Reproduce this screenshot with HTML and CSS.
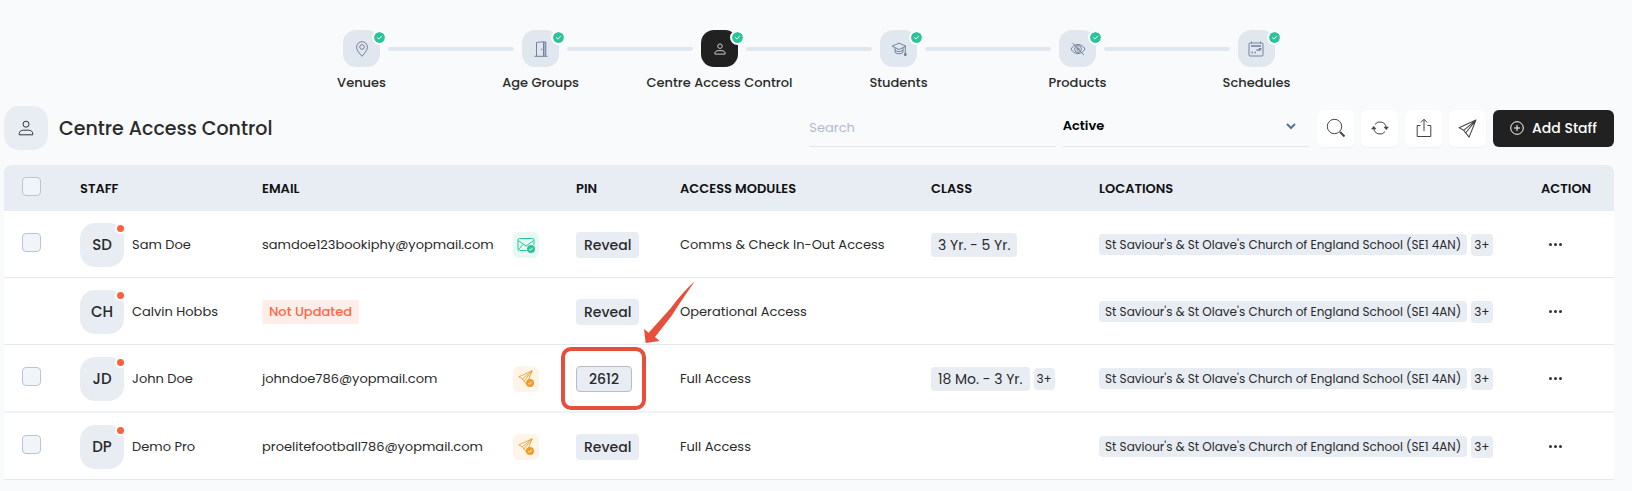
FILE: index.html
```html
<!DOCTYPE html>
<html lang="en">
<head>
<meta charset="utf-8">
<meta name="viewport" content="width=device-width, initial-scale=1">
<title>Centre Access Control</title>
<link rel="stylesheet" href="styles.css">
</head>
<body>
<svg class="sprite" aria-hidden="true">
  <symbol id="tick" viewBox="0 0 12 12"><circle cx="6" cy="6" r="6" fill="#2bc39b"/><path d="M3.8 6.2l1.6 1.5 2.9-3.1" fill="none" stroke="#fff" stroke-linecap="round" stroke-linejoin="round"/></symbol>
  <symbol id="person" viewBox="0 0 16 16"><circle cx="8" cy="4.2" r="3"/><path d="M1.2 14.8v-.9c0-2.500 2-3.700 4.200-3.700h5.200c2.200 0 4.200 1.200 4.200 3.700v.9z"/></symbol>
  <symbol id="plane" viewBox="0 0 18 18"><path d="M17 1L1 8.200l4.300 2.500L10.500 17.200z M17 1L5.300 10.700 M17 1L7.400 13"/></symbol>
  <symbol id="badge" viewBox="0 0 8 8"><circle cx="4" cy="4" r="4" fill="currentColor" stroke="none"/><path d="M2.300 4.200l1.200 1.100 2.200-2.500" fill="none" stroke="#fff"/></symbol>
</svg>
<main class="page">
  <nav aria-label="Setup steps">
    <ol class="steps">
      <li class="step">
        <div class="step-track"><span class="step-icon"><svg class="icon" width="16" height="16" viewBox="0 0 16 16"><path d="M8 15.300C5 12 2.600 9 2.600 6.100a5.400 5.400 0 0 1 10.800 0C13.400 9 11 12 8 15.300z"/><circle cx="8" cy="6" r="2.300"/></svg><svg class="step-tick"><use href="#tick"/></svg></span></div>
        <span class="step-label">Venues</span>
      </li>
      <li class="step">
        <div class="step-track"><span class="step-icon"><svg class="icon" width="16" height="16" viewBox="0 0 16 16"><path d="M1.500 15.300h13M3.500 15.300V1.500l7-.8v14.600M10.500 1h2.300v14.300M12 1v14"/><circle cx="8.500" cy="8.500" r=".4"/></svg><svg class="step-tick"><use href="#tick"/></svg></span></div>
        <span class="step-label">Age Groups</span>
      </li>
      <li class="step active">
        <div class="step-track"><span class="step-icon"><svg class="icon" width="12" height="12"><use href="#person"/></svg><svg class="step-tick"><use href="#tick"/></svg></span></div>
        <span class="step-label">Centre Access Control</span>
      </li>
      <li class="step">
        <div class="step-track"><span class="step-icon"><svg class="icon" width="16" height="16" viewBox="0 0 16 16"><path d="M8 2.200L15 5.200 8 8.500 1 5.200zM4 7v4.300c2 2 6.200 2 8 0V7M4 9.200c2 1.800 6.200 1.800 8 0M14.300 5.500v7"/><path d="M13.500 12.500h1.600v2h-1.600z" fill="currentColor"/></svg><svg class="step-tick"><use href="#tick"/></svg></span></div>
        <span class="step-label">Students</span>
      </li>
      <li class="step">
        <div class="step-track"><span class="step-icon"><svg class="icon" width="16" height="16" viewBox="0 0 16 16"><path d="M1 8c3.200-6 10.800-6 14 0-3.200 6-10.800 6-14 0zM2.500 2l11.500 12"/><circle cx="8" cy="8" r="3.400"/><circle cx="8" cy="8" r="1.200"/></svg><svg class="step-tick"><use href="#tick"/></svg></span></div>
        <span class="step-label">Products</span>
      </li>
      <li class="step">
        <div class="step-track"><span class="step-icon"><svg class="icon" width="16" height="16" viewBox="0 0 16 16"><rect x="1" y="2" width="14" height="13" rx="1"/><path d="M3.500.5v2M12.500.5v2"/><path d="M3 5h10M11 7.800h2.500M8.500 9h4M3.500 11.500h1.500M6.500 11.500h1.500" stroke-width="1.500"/></svg><svg class="step-tick"><use href="#tick"/></svg></span></div>
        <span class="step-label">Schedules</span>
      </li>
    </ol>
  </nav>

  <header class="toolbar">
    <span class="title-icon"><svg class="icon" width="16" height="16"><use href="#person"/></svg></span>
    <h1 class="title">Centre Access Control</h1>
    <input class="field search" type="search" placeholder="Search" aria-label="Search">
    <div class="select-wrap">
      <select class="field status" aria-label="Status"><option>Active</option><option>Inactive</option></select>
      <svg class="chevron" width="10" height="7" viewBox="0 0 10 7"><path d="M1 1l4 4 4-4"/></svg>
    </div>
    <button class="tool" type="button" aria-label="Search staff"><svg class="icon" width="20" height="20" viewBox="0 0 20 20"><circle cx="8.500" cy="8.500" r="7.200"/><path d="M14 14l4.500 4.500" stroke-width="2"/></svg></button>
    <button class="tool" type="button" aria-label="Refresh"><svg class="icon" width="18" height="18" viewBox="0 0 18 18"><path d="M3.800 5.500a6.300 6.300 0 0 1 11.400 3.500M14.200 12.500A6.300 6.300 0 0 1 2.800 9"/><path d="M13 8h4.400l-2.200 2.800zM.6 10H5L2.800 7.200z" fill="currentColor" stroke-width=".5"/></svg></button>
    <button class="tool" type="button" aria-label="Export"><svg class="icon" width="20" height="20" viewBox="0 0 20 20"><path d="M6.500 7.500H3.200v11h13.600v-11h-3.300M10 13V1.500M6.800 4.500L10 1.300l3.200 3.200"/></svg></button>
    <button class="tool" type="button" aria-label="Send"><svg class="icon" width="19" height="19"><use href="#plane"/></svg></button>
    <button class="add" type="button"><svg class="icon" width="14" height="14" viewBox="0 0 14 14"><circle cx="7" cy="7" r="6.300"/><path d="M7 4v6M4 7h6"/></svg>Add Staff</button>
  </header>

  <table class="staff">
    <colgroup><col class="c-check"><col class="c-staff"><col class="c-email"><col class="c-pin"><col class="c-access"><col class="c-class"><col class="c-loc"><col class="c-action"></colgroup>
    <thead>
      <tr><th class="check"><input type="checkbox" aria-label="Select all staff"></th><th>STAFF</th><th>EMAIL</th><th>PIN</th><th>ACCESS MODULES</th><th>CLASS</th><th>LOCATIONS</th><th>ACTION</th></tr>
    </thead>
    <tbody>
      <tr>
        <td class="check"><input type="checkbox" aria-label="Select Sam Doe"></td>
        <td><div class="person"><span class="avatar">SD</span>Sam Doe</div></td>
        <td><div class="email">samdoe123bookiphy@yopmail.com<span class="mail-state verified"><svg class="icon" width="18" height="18" viewBox="0 0 18 18"><path d="M9.500 14.500H2.500a1.500 1.500 0 0 1-1.500-1.500V4a1.500 1.500 0 0 1 1.500-1.500h13A1.500 1.500 0 0 1 17 4v5M1.300 4.500L9 10l7.700-5.500M1.500 13.500l4.500-5"/><use href="#badge" x="10" y="9" width="8" height="8"/></svg></span></div></td>
        <td><button class="pin" type="button">Reveal</button></td>
        <td>Comms &amp; Check In-Out Access</td>
        <td><div class="chips"><span class="chip">3 Yr. - 5 Yr.</span></div></td>
        <td><div class="chips"><span class="chip place">St Saviour's &amp; St Olave's Church of England School (SE1 4AN)</span><span class="chip more">3+</span></div></td>
        <td><button class="dots" type="button" aria-label="Actions for Sam Doe"><i></i><i></i><i></i></button></td>
      </tr>
      <tr>
        <td class="check"></td>
        <td><div class="person"><span class="avatar">CH</span>Calvin Hobbs</div></td>
        <td><span class="missing">Not Updated</span></td>
        <td><button class="pin" type="button">Reveal</button></td>
        <td>Operational Access</td>
        <td></td>
        <td><div class="chips"><span class="chip place">St Saviour's &amp; St Olave's Church of England School (SE1 4AN)</span><span class="chip more">3+</span></div></td>
        <td><button class="dots" type="button" aria-label="Actions for Calvin Hobbs"><i></i><i></i><i></i></button></td>
      </tr>
      <tr>
        <td class="check"><input type="checkbox" aria-label="Select John Doe"></td>
        <td><div class="person"><span class="avatar">JD</span>John Doe</div></td>
        <td><div class="email">johndoe786@yopmail.com<span class="mail-state sent"><svg class="icon" width="18" height="18" viewBox="0 0 18 18"><use href="#plane" width="17" height="15"/><use href="#badge" x="9" y="9" width="8" height="8"/></svg></span></div></td>
        <td><div class="callout"><button class="pin shown" type="button">2612</button><span class="callout-box"></span><svg class="callout-arrow" viewBox="489 240 159 192"><path d="M645 243Q604 280 572 325L506 398 492 387 497 429 539 423 525 411 575 347Q605 300 645 243z"/></svg></div></td>
        <td>Full Access</td>
        <td><div class="chips"><span class="chip">18 Mo. - 3 Yr.</span><span class="chip more">3+</span></div></td>
        <td><div class="chips"><span class="chip place">St Saviour's &amp; St Olave's Church of England School (SE1 4AN)</span><span class="chip more">3+</span></div></td>
        <td><button class="dots" type="button" aria-label="Actions for John Doe"><i></i><i></i><i></i></button></td>
      </tr>
      <tr>
        <td class="check"><input type="checkbox" aria-label="Select Demo Pro"></td>
        <td><div class="person"><span class="avatar">DP</span>Demo Pro</div></td>
        <td><div class="email">proelitefootball786@yopmail.com<span class="mail-state sent"><svg class="icon" width="18" height="18" viewBox="0 0 18 18"><use href="#plane" width="17" height="15"/><use href="#badge" x="9" y="9" width="8" height="8"/></svg></span></div></td>
        <td><button class="pin" type="button">Reveal</button></td>
        <td>Full Access</td>
        <td></td>
        <td><div class="chips"><span class="chip place">St Saviour's &amp; St Olave's Church of England School (SE1 4AN)</span><span class="chip more">3+</span></div></td>
        <td><button class="dots" type="button" aria-label="Actions for Demo Pro"><i></i><i></i><i></i></button></td>
      </tr>
    </tbody>
  </table>
</main>
</body>
</html>
```
FILE: styles.css
```css
*, *::before, *::after { box-sizing: border-box; }

body {
  margin: 0;
  background: #f9fafc;
  color: #2a2a2a;
  font: 13px/20px Poppins, Inter, sans-serif;
}

button, input, select { font: inherit; color: inherit; }
button { border: 0; cursor: pointer; }

.sprite { position: absolute; width: 0; height: 0; }
.icon { fill: none; stroke: currentColor; stroke-width: 1; stroke-linejoin: round; }

.page { padding: 30px 18px 0 4px; }

/* Stepper */
.steps { display: flex; width: 66.7%; margin: 0 auto; padding: 0; list-style: none; }
.step { flex: 1; text-align: center; }
.step-track { display: flex; align-items: center; gap: 8px; }
.step-track::before, .step-track::after { content: ""; flex: 1; height: 4px; background: #e1e7ef; }
.step-track::before { border-radius: 0 2px 2px 0; }
.step-track::after { border-radius: 2px 0 0 2px; }
.step:first-child .step-track::before, .step:last-child .step-track::after { background: none; }
.step-icon {
  position: relative;
  display: grid;
  place-items: center;
  width: 37px;
  height: 37px;
  border-radius: 13px;
  background: #e1e7ef;
  color: #73819d;
}
.active .step-icon { background: #212121; color: #fff; }
.step-tick {
  position: absolute;
  top: 0;
  right: -7px;
  width: 15px;
  height: 15px;
  border: 2px solid #f9fafc;
  border-radius: 50%;
  background: #f9fafc;
}
.step-label { display: block; margin-top: 6px; font-weight: 500; }

/* Toolbar */
.toolbar { display: flex; align-items: center; gap: 7px; margin-top: 13px; }
.title-icon {
  display: grid;
  place-items: center;
  width: 44px;
  height: 44px;
  border-radius: 15px;
  background: #e8edf4;
  color: #333;
}
.title { flex: 1; margin: 0 0 0 4px; padding-top: 1px; font-size: 19px; line-height: 28px; font-weight: 500; }
.field {
  width: 100%;
  height: 37px;
  padding: 0;
  border: 0;
  border-bottom: 1px solid #e4e7ea;
  border-radius: 0;
  background: none;
  appearance: none;
  outline: 0;
}
.search { width: 15.3%; }
.search::placeholder { color: #adbdcf; opacity: 1; }
.select-wrap { position: relative; width: 15.3%; }
.status { padding-bottom: 3px; color: #000; font-weight: 600; }
.chevron { position: absolute; top: 13px; right: 13px; fill: none; stroke: #5a7198; stroke-width: 2; pointer-events: none; }
.tool {
  display: grid;
  place-items: center;
  width: 37px;
  height: 37px;
  padding: 0;
  border-radius: 6px;
  background: #fff;
  box-shadow: 0 1px 2px #0000000a;
  color: #444;
}
.select-wrap + .tool { margin-left: 1px; }
.add {
  display: flex;
  align-items: center;
  justify-content: center;
  gap: 8px;
  width: 121px;
  height: 37px;
  padding: 0;
  border-radius: 6px;
  background: #212121;
  color: #fff;
  font-size: 14px;
  font-weight: 500;
}

/* Staff table */
.staff { width: 100%; margin-top: 15px; table-layout: fixed; border-collapse: separate; border-spacing: 0; }
.c-check { width: 76px; }
.c-staff { width: 182px; }
.c-email { width: 314px; }
.c-pin { width: 104px; }
.c-access { width: 251px; }
.c-class { width: 168px; }
.c-loc { width: 442px; }
.c-action { width: 73px; }
.staff th {
  height: 46px;
  padding: 1px 0 0;
  background: #e8edf4;
  color: #111;
  font-weight: 600;
  text-align: left;
  white-space: nowrap;
}
.staff th:first-child { border-top-left-radius: 8px; }
.staff th:last-child { border-top-right-radius: 8px; }
.staff td { height: 67px; padding: 1px 0 0; border-bottom: 1px solid #e4e9ee; background: #fff; white-space: nowrap; }
.staff tr:nth-child(3) td { height: 68px; border-bottom: 2px solid #eff2f6; }
.staff .check { padding: 0 0 4px 18px; }
.check input {
  display: block;
  width: 19px;
  height: 19px;
  margin: 0;
  border: 1px solid #b9c5d3;
  border-radius: 4px;
  background: #f1f4f9;
  appearance: none;
}

.person { display: flex; align-items: center; gap: 8px; }
.avatar {
  position: relative;
  display: grid;
  place-items: center;
  width: 44px;
  height: 44px;
  border-radius: 15px;
  background: #e8edf4;
  font-size: 15px;
  font-weight: 500;
}
.avatar::after {
  content: "";
  position: absolute;
  top: 0;
  right: -2px;
  width: 11px;
  height: 11px;
  border: 2px solid #fff;
  border-radius: 50%;
  background: #ff5f3c;
}

.email { display: flex; align-items: center; justify-content: space-between; padding-right: 37px; }
.mail-state { display: grid; place-items: center; width: 26px; height: 26px; border-radius: 6px; }
.verified { background: #e8f8f3; color: #2bc39b; }
.sent { background: #fef4e8; color: #ee9b27; }
.missing { display: inline-block; padding: 2px 7px; border-radius: 3px; background: #ffedea; color: #ff6845; font-weight: 500; }

.pin { display: block; height: 26px; padding: 0 8px; border-radius: 4px; background: #e8edf4; font-size: 14px; font-weight: 500; }
.shown { padding: 0 12px; border: 1px solid #b6bdc6; }

.callout { position: relative; width: max-content; }
.callout-box {
  position: absolute;
  inset: -19px -14px -18px -15px;
  border: 4px solid #e54f3c;
  border-radius: 10px;
  pointer-events: none;
}
.callout-arrow { position: absolute; left: 67px; bottom: 48px; width: 53px; height: 64px; fill: #e54f3c; pointer-events: none; }

.chips { display: flex; align-items: center; gap: 4px; }
.chip { padding: 2px 7px; border-radius: 4px; background: #e8edf4; font-size: 14px; }
.place { padding: 2px 6px; font-size: 12px; line-height: 17px; }
.more { padding: 2px 3px; font-size: 12px; line-height: 18px; }

.dots { display: flex; gap: 2px; margin-left: 4px; padding: 8px 4px; background: none; }
.dots i { width: 3px; height: 3px; border-radius: 50%; background: #333; }
```
